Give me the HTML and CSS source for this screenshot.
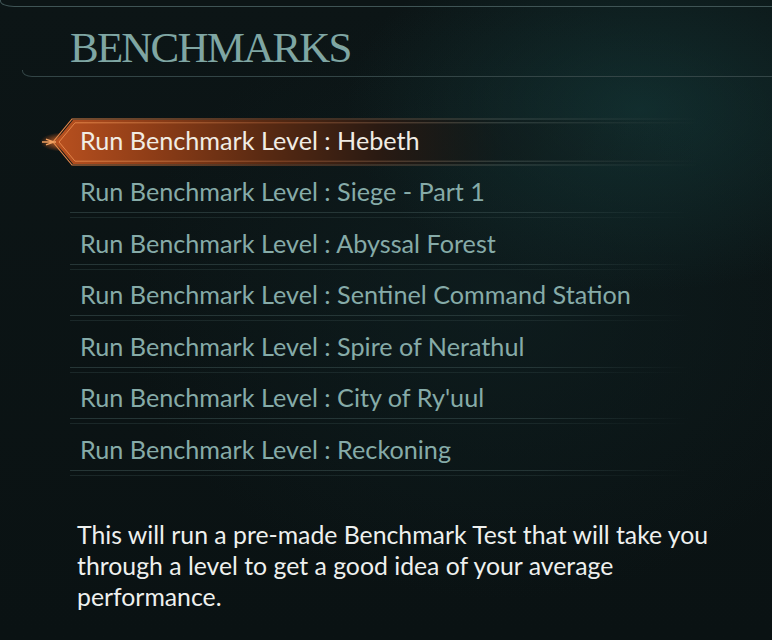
FILE: index.html
```html
<!DOCTYPE html>
<html lang="en">
<head>
<meta charset="utf-8">
<title>Benchmarks</title>
<link rel="stylesheet" href="styles.css">
</head>
<body>
<div class="screen">
  <div class="top-rule"></div>
  <h1 class="title">BENCHMARKS</h1>
  <div class="title-rule"></div>

  <ul class="levels">
    <li class="level selected">
      <svg class="highlight" viewBox="0 0 660 50" preserveAspectRatio="none" aria-hidden="true">
        <defs>
          <linearGradient id="fill" x1="0" y1="0" x2="1" y2="0">
            <stop offset="0" stop-color="#b8501f"/>
            <stop offset="0.15" stop-color="#8e3d17"/>
            <stop offset="0.32" stop-color="#5a2a12"/>
            <stop offset="0.5" stop-color="#2a1a12"/>
            <stop offset="0.7" stop-color="#0f1515" stop-opacity="0.4"/>
            <stop offset="1" stop-color="#0f1515" stop-opacity="0"/>
          </linearGradient>
          <linearGradient id="edge" x1="0" y1="0" x2="1" y2="0">
            <stop offset="0" stop-color="#e8884a"/>
            <stop offset="0.35" stop-color="#8a4a2a"/>
            <stop offset="0.7" stop-color="#3b4a48"/>
            <stop offset="1" stop-color="#3b4a48" stop-opacity="0"/>
          </linearGradient>
          <radialGradient id="glow" cx="0.5" cy="0.5" r="0.5">
            <stop offset="0" stop-color="#ff8a3a" stop-opacity="0.9"/>
            <stop offset="1" stop-color="#ff6a20" stop-opacity="0"/>
          </radialGradient>
        </defs>
        <ellipse cx="22" cy="25" rx="22" ry="10" fill="url(#glow)"/>
        <polygon points="15,25 33,2 660,2 660,48 33,48" fill="url(#fill)"/>
        <polyline points="660,1 32,1 13,25 32,49 660,49" fill="none" stroke="url(#edge)" stroke-width="1.2"/>
        <polyline points="660,5 35,5 19,25 35,45 660,45" fill="none" stroke="url(#edge)" stroke-width="1"/>
        <path d="M2,25 H16 M6,22 L14,25 L6,28" fill="none" stroke="#f0a060" stroke-width="1.4"/>
      </svg>
      <span class="label">Run Benchmark Level : Hebeth</span>
    </li>
    <li class="level"><span class="label">Run Benchmark Level : Siege - Part 1</span></li>
    <li class="level"><span class="label">Run Benchmark Level : Abyssal Forest</span></li>
    <li class="level"><span class="label">Run Benchmark Level : Sentinel Command Station</span></li>
    <li class="level"><span class="label">Run Benchmark Level : Spire of Nerathul</span></li>
    <li class="level"><span class="label">Run Benchmark Level : City of Ry'uul</span></li>
    <li class="level"><span class="label">Run Benchmark Level : Reckoning</span></li>
  </ul>

  <p class="description">This will run a pre-made Benchmark Test that will take you through a level to get a good idea of your average performance.</p>
</div>
</body>
</html>
```

FILE: styles.css
```css
html, body {
  margin: 0;
  padding: 0;
  height: 100%;
}

body {
  background-color: #0b1213;
  background-image:
    radial-gradient(ellipse 420px 260px at 640px 110px, rgba(22, 64, 64, 0.55), rgba(22, 64, 64, 0) 70%),
    radial-gradient(ellipse 500px 400px at 500px 300px, rgba(16, 36, 38, 0.5), rgba(16, 36, 38, 0) 75%),
    linear-gradient(180deg, #0c1516 0%, #0a1213 100%);
  overflow: hidden;
}

.screen {
  width: 772px;
  height: 640px;
  display: flex;
  flex-direction: column;
}

.top-rule {
  height: 6px;
  margin-top: 0;
  border-bottom: 1.5px solid #3f5455;
  border-left: 1.5px solid #3f5455;
  border-bottom-left-radius: 14px 6px;
}

.title {
  margin: 0;
  padding: 19px 0 0 70px;
  height: 44px;
  font-family: "Liberation Serif", serif;
  font-weight: 400;
  font-size: 43px;
  line-height: 44px;
  letter-spacing: -1.8px;
  color: #7fa6a3;
}

.title-rule {
  height: 6px;
  margin-left: 22px;
  margin-top: 0;
  border-bottom: 1.5px solid #334546;
  border-left: 1.5px solid #334546;
  border-bottom-left-radius: 10px 6px;
}

.levels {
  list-style: none;
  margin: 39px 0 0 0;
  padding: 0;
}

.level {
  position: relative;
  height: 51.5px;
  margin-left: 70px;
  width: 620px;
  display: flex;
  align-items: center;
  box-sizing: border-box;
  background-image:
    linear-gradient(90deg, rgba(60, 82, 82, 0.55) 0%, rgba(60, 82, 82, 0.5) 75%, rgba(60, 82, 82, 0) 100%),
    linear-gradient(90deg, rgba(50, 70, 70, 0.4) 0%, rgba(50, 70, 70, 0.35) 75%, rgba(50, 70, 70, 0) 100%);
  background-size: 100% 1px, 100% 1px;
  background-position: 0 calc(100% - 6px), 0 calc(100% - 1px);
  background-repeat: no-repeat;
}

.label {
  position: relative;
  padding-left: 10px;
  font-family: "Lato", sans-serif;
  font-size: 25.2px;
  color: #86aba8;
  white-space: nowrap;
  transform: translateY(-2px);
}

.selected .label {
  color: #f1ece4;
}

.selected {
  background-image: none;
}

.highlight {
  position: absolute;
  left: -30px;
  top: 2px;
  width: 660px;
  height: 48px;
}

.description {
  margin: 42px 0 0 77px;
  width: 660px;
  font-family: "Lato", sans-serif;
  font-size: 24.8px;
  line-height: 31px;
  color: #eef0ee;
}
```
